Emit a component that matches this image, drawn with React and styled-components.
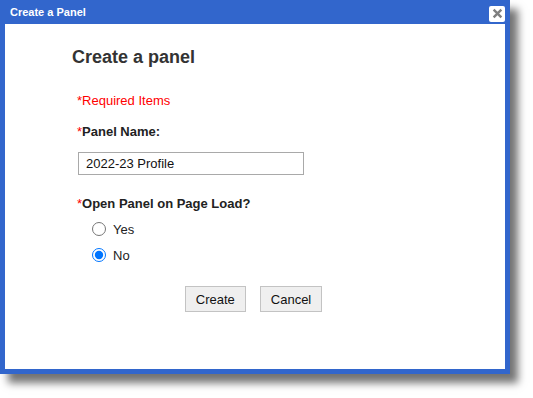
import React, { useState } from 'react';
import styled, { createGlobalStyle } from 'styled-components';

const GlobalStyle = createGlobalStyle`
  html, body {
    margin: 0;
    padding: 0;
    background: #ffffff;
  }
  body {
    font-family: "Liberation Sans", Arial, sans-serif;
    font-size: 13px;
    color: #222;
  }
`;

const Page = styled.div`
  width: 533px;
  height: 398px;
  overflow: hidden;
`;

const Dialog = styled.div`
  width: 510px;
  box-sizing: border-box;
  background: #3266cc;
  padding: 0 5px 5px 5px;
  box-shadow: 8px 9px 8px rgba(0, 0, 0, 0.55);
`;

const TitleBar = styled.div`
  height: 24px;
  display: flex;
  align-items: center;
  justify-content: space-between;
  padding-left: 5px;
`;

const Title = styled.span`
  color: #ffffff;
  font-weight: bold;
  font-size: 11px;
`;

const CloseButton = styled.button`
  width: 16px;
  height: 16px;
  margin-top: 3px;
  padding: 0;
  border: none;
  border-radius: 2px;
  background: #ffffff;
  display: flex;
  align-items: center;
  justify-content: center;
  cursor: pointer;
`;

const Body = styled.div`
  background: #ffffff;
  height: 345px;
  box-sizing: border-box;
  padding: 22px 0 0 67px;
`;

const Heading = styled.h2`
  margin: 0;
  font-size: 18px;
  line-height: 22px;
  font-weight: bold;
  color: #333;
`;

const Form = styled.div`
  padding-left: 5px;
  display: flex;
  flex-direction: column;
  align-items: flex-start;
`;

const Note = styled.div`
  margin-top: ${p => p.$top}px;
  line-height: 16px;
  color: #ff0000;
`;

const Label = styled.label`
  margin-top: ${p => p.$top}px;
  line-height: 16px;
  font-weight: bold;
  color: #222;
`;

const Star = styled.span`
  color: #ff0000;
  font-weight: normal;
`;

const TextInput = styled.input`
  margin-top: 12px;
  margin-left: 1px;
  width: 226px;
  height: 23px;
  box-sizing: border-box;
  border: 1px solid #a9a9a9;
  padding: 0 7px;
  font-family: "Liberation Sans", Arial, sans-serif;
  font-size: 13px;
  color: #111;
  outline: none;
`;

const RadioGroup = styled.div`
  margin-top: 7px;
  padding-left: 15px;
  display: flex;
  flex-direction: column;
  gap: 6px;
`;

const RadioRow = styled.label`
  height: 20px;
  display: flex;
  align-items: center;
  gap: 7px;
  color: #222;
`;

const Radio = styled.input`
  margin: 0;
  width: 14px;
  height: 14px;
  accent-color: #0075ff;
`;

const Actions = styled.div`
  margin: 21px 0 0 -67px;
  display: flex;
  justify-content: center;
  gap: 14px;
  padding-right: 3px;
`;

const Button = styled.button`
  height: 26px;
  padding: 0 10px;
  background: #efefef;
  border: 1px solid #c3c3c3;
  font-family: "Liberation Sans", Arial, sans-serif;
  font-size: 13px;
  color: #111;
  cursor: pointer;
`;

export default function App() {
  const [name, setName] = useState('2022-23 Profile');
  const [open, setOpen] = useState('no');

  return (
    <Page>
      <GlobalStyle />
      <Dialog>
        <TitleBar>
          <Title>Create a Panel</Title>
          <CloseButton aria-label="Close">
            <svg width="11" height="11" viewBox="0 0 10 10">
              <path d="M1.5 1.5 L8.5 8.5 M8.5 1.5 L1.5 8.5" stroke="#7f7f7f" strokeWidth="2.2" />
            </svg>
          </CloseButton>
        </TitleBar>
        <Body>
          <Heading>Create a panel</Heading>
          <Form>
            <Note $top={25}>*Required Items</Note>
            <Label $top={15}><Star>*</Star>Panel Name:</Label>
            <TextInput value={name} onChange={e => setName(e.target.value)} />
            <Label $top={21}><Star>*</Star>Open Panel on Page Load?</Label>
            <RadioGroup>
              <RadioRow>
                <Radio type="radio" name="open" checked={open === 'yes'} onChange={() => setOpen('yes')} />
                Yes
              </RadioRow>
              <RadioRow>
                <Radio type="radio" name="open" checked={open === 'no'} onChange={() => setOpen('no')} />
                No
              </RadioRow>
            </RadioGroup>
          </Form>
          <Actions>
            <Button>Create</Button>
            <Button>Cancel</Button>
          </Actions>
        </Body>
      </Dialog>
    </Page>
  );
}
